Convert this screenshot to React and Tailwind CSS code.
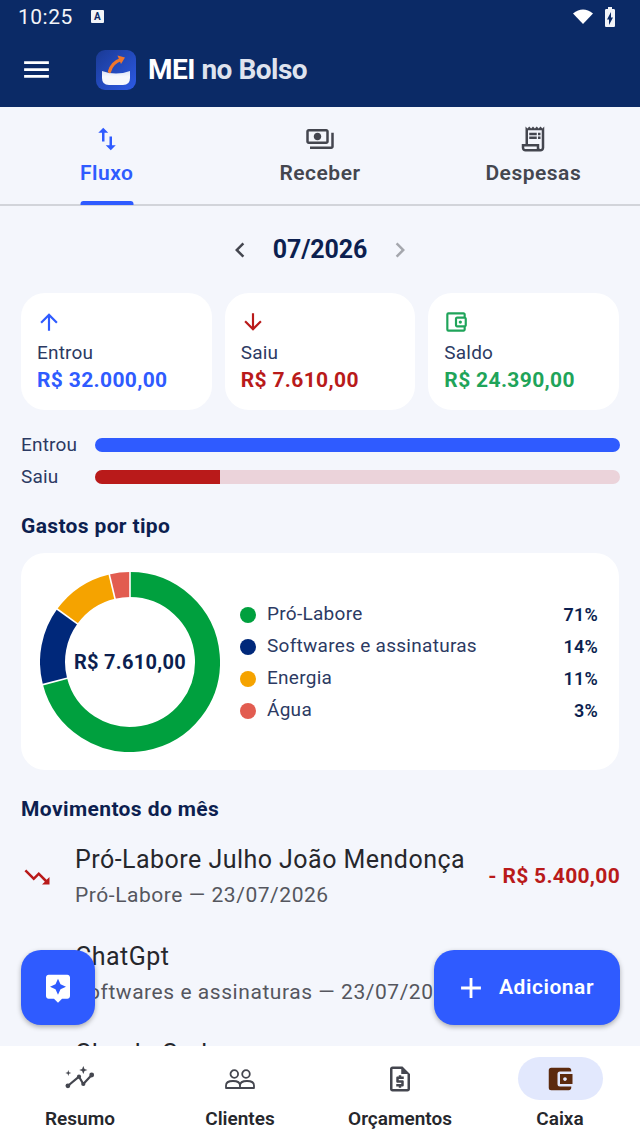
import React from "react";
import {
  MdMenu, MdSwapVert, MdOutlinePayments, MdOutlineReceiptLong, MdChevronLeft, MdChevronRight,
  MdArrowUpward, MdArrowDownward, MdOutlineAccountBalanceWallet, MdTrendingDown, MdAssistant, MdAdd,
  MdOutlineRequestQuote, MdAccountBalanceWallet, MdBatteryChargingFull,
} from "react-icons/md";

function Logo() {
  return (
    <svg width="40" height="40" viewBox="0 0 40 40">
      <defs>
        <linearGradient id="lg" x1="0" y1="0" x2="1" y2="1">
          <stop offset="0" stopColor="#1a3a94" />
          <stop offset="1" stopColor="#2c5ae6" />
        </linearGradient>
        <linearGradient id="bowl" x1="0" y1="0" x2="0" y2="1">
          <stop offset="0" stopColor="#dbe3f6" />
          <stop offset="0.4" stopColor="#f6f8fd" />
        </linearGradient>
      </defs>
      <rect width="40" height="40" rx="9" fill="url(#lg)" />
      <path d="M6 21 Q20 26 34 21 L34 28 Q34 35 27 35 L13 35 Q6 35 6 28 Z" fill="url(#bowl)" />
      <path d="M13.5 21.5 Q16 12.5 25 9.5" fill="none" stroke="#f0762b" strokeWidth="3.2" strokeLinecap="round" />
      <path d="M21.5 5.5 L29 7.5 L25 14 Z" fill="#f0762b" />
    </svg>
  );
}

function ResumoIcon() {
  return (
    <svg width="30" height="30" viewBox="0 0 30 30" fill="none">
      <polyline points="2.7,22 14,12.7 18.3,20 26.7,11" stroke="currentColor" strokeWidth="2.2" strokeLinejoin="round" />
      <circle cx="2.9" cy="21.8" r="2.4" fill="currentColor" />
      <circle cx="14" cy="12.7" r="2.1" fill="currentColor" />
      <circle cx="18.3" cy="20" r="2.1" fill="currentColor" />
      <circle cx="26.7" cy="11" r="2.4" fill="currentColor" />
      <path d="M18.3 2 L19.5 4.9 L22.4 6 L19.5 7.1 L18.3 10 L17.1 7.1 L14.2 6 L17.1 4.9 Z" fill="currentColor" />
      <path d="M3.3 6 L4 8.3 L6.3 9 L4 9.7 L3.3 12 L2.6 9.7 L0.3 9 L2.6 8.3 Z" fill="currentColor" />
    </svg>
  );
}

function ClientesIcon() {
  return (
    <svg width="30" height="30" viewBox="0 0 30 30" fill="none" stroke="currentColor" strokeWidth="1.8" strokeLinejoin="round">
      <circle cx="9.3" cy="10" r="3.8" />
      <circle cx="21" cy="10" r="3.8" />
      <path d="M1 24 V21.5 Q1 17 8 17 Q15 17 15 21.5 V24 Z" />
      <path d="M15 21.5 Q15 17 22 17 Q29 17 29 21.5 V24 H15" />
    </svg>
  );
}

function Donut() {
  const C = 65;
  const r = 77.5;
  const segs = [
    [0, 70.96, "#00a03e"],
    [70.96, 85.0, "#00287a"],
    [85.0, 96.3, "#f5a300"],
    [96.3, 100, "#e25c50"],
  ];
  const pt = (p, rad) => {
    const a = (p / 100) * 2 * Math.PI;
    return [90 + rad * Math.sin(a), 90 - rad * Math.cos(a)];
  };
  return (
    <svg width="180" height="180" viewBox="0 0 180 180" className="block">
      {segs.map(([a, b, c]) => {
        const [x1, y1] = pt(a, r);
        const [x2, y2] = pt(b, r);
        return (
          <path
            key={c}
            d={`M${x1} ${y1} A${r} ${r} 0 ${b - a > 50 ? 1 : 0} 1 ${x2} ${y2}`}
            fill="none"
            stroke={c}
            strokeWidth="25"
          />
        );
      })}
      {segs.map(([a]) => {
        const [x1, y1] = pt(a, C - 1);
        const [x2, y2] = pt(a, 91);
        return <line key={a} x1={x1} y1={y1} x2={x2} y2={y2} stroke="#ffffff" strokeWidth="1.6" />;
      })}
    </svg>
  );
}

function Tab({ icon, label, active }) {
  return (
    <div className="relative flex-1 flex flex-col items-center pt-[17px]">
      <div className={active ? "text-[#2f5bff]" : "text-[#44464f]"}>{icon}</div>
      <div className={`mt-[7px] text-[21px] leading-[24px] font-semibold tracking-[0.5px] ${active ? "text-[#2f5bff]" : "text-[#44464f]"}`}>{label}</div>
      {active && <div className="absolute -bottom-[1px] left-1/2 -translate-x-1/2 w-[53px] h-[4px] rounded-t-[3px] bg-[#2f5bff]" />}
    </div>
  );
}

function Stat({ icon, label, value, color }) {
  return (
    <div className="flex-1 h-[117px] bg-white rounded-[24px] pl-[16px] pt-[16px]">
      <div className="h-[24px] -ml-[1px]">{icon}</div>
      <div className="mt-[8px] text-[19px] leading-[24px] tracking-[0.2px] text-[#2c3a63]">{label}</div>
      <div className={`mt-[3px] text-[21px] leading-[24px] font-bold tracking-[0.35px] ${color}`}>{value}</div>
    </div>
  );
}

function Bar({ label, fill, color, track }) {
  return (
    <div className="flex items-center h-[32px]">
      <div className="w-[74px] text-[19px] tracking-[0.2px] text-[#2c3a63]">{label}</div>
      <div className={`flex-1 h-[14px] rounded-[7px] overflow-hidden ${track}`}>
        <div className={`h-full ${color}`} style={{ width: fill }} />
      </div>
    </div>
  );
}

function Legend({ color, name, pct }) {
  return (
    <div className="flex items-center h-[32px]">
      <div className={`w-[16px] h-[16px] rounded-full ${color}`} />
      <div className="ml-[11px] flex-1 text-[19px] tracking-[0.28px] text-[#2c3a63]">{name}</div>
      <div className="text-[18px] font-semibold tracking-[0.2px] text-[#0c1f50]">{pct}</div>
    </div>
  );
}

function Move({ title, sub, amount }) {
  return (
    <div className="flex items-center h-[97px] shrink-0">
      <div className="w-[54px] shrink-0 text-[#b91a1a]">
        <MdTrendingDown size={30} className="ml-[1px]" />
      </div>
      <div className="flex-1 min-w-0">
        <div className="text-[25px] leading-[32px] tracking-[0.47px] text-[#26272c] whitespace-nowrap">{title}</div>
        <div className="mt-[5px] h-[28px] text-[21px] leading-[28px] tracking-[0.55px] text-[#55565e] whitespace-nowrap">{sub}</div>
      </div>
      {amount && <div className="shrink-0 -mr-[1px] text-[21px] font-bold tracking-[0.3px] text-[#b91a1a] whitespace-nowrap">{amount}</div>}
    </div>
  );
}

function NavItem({ icon, label, active }) {
  return (
    <div className="flex-1 flex flex-col items-center pt-[11px]">
      <div className={`w-[85px] h-[43px] rounded-full flex items-center justify-center ${active ? "bg-[#e2e8fd] text-[#5c2a0e]" : "text-[#44464f]"}`}>
        {icon}
      </div>
      <div className="mt-[7px] text-[19px] leading-[24px] font-semibold text-[#26272c]">{label}</div>
    </div>
  );
}

export default function App() {
  return (
    <div className="relative w-[640px] h-[1140px] overflow-hidden flex flex-col bg-[#f4f6fc] font-['Roboto',sans-serif]">
      <header className="h-[107px] shrink-0 bg-[#0b2a66] text-white flex flex-col">
        <div className="h-[33px] flex items-center pl-[18px] pr-[18px]">
          <span className="text-[21px] leading-[26px] tracking-[0.5px] text-[#f2f4f8]">10:25</span>
          <span className="ml-[18px] w-[13px] h-[13px] bg-[#f2f4f8] rounded-[1px] flex items-center justify-center text-[10px] leading-none font-bold text-[#0b2a66]">A</span>
          <span className="ml-auto flex items-center gap-[5px]">
            <svg width="20" height="15" viewBox="0 0 20 15"><path d="M0 4.5 Q10 -3.5 20 4.5 L10 15 Z" fill="#ffffff" /></svg>
            <MdBatteryChargingFull size={24} className="text-[#f2f4f8]" />
          </span>
        </div>
        <div className="flex-1 flex items-center pl-[20px] pb-[1px]">
          <MdMenu size={33} />
          <div className="ml-[43px]"><Logo /></div>
          <div className="ml-[12px] text-[28px] font-bold tracking-[-0.5px] whitespace-nowrap">
            MEI <span className="text-[#dfe3ee]">no Bolso</span>
          </div>
        </div>
      </header>

      <nav className="h-[99px] shrink-0 flex border-b-[2px] border-[#d2d4da] relative">
        <Tab active label="Fluxo" icon={<MdSwapVert size={30} />} />
        <Tab label="Receber" icon={<MdOutlinePayments size={30} />} />
        <Tab label="Despesas" icon={<MdOutlineReceiptLong size={30} />} />
      </nav>

      <main className="flex-1 min-h-0 overflow-hidden px-[21px] flex flex-col">
        <div className="h-[87px] shrink-0 flex items-center justify-center">
          <MdChevronLeft size={30} className="text-[#44464f]" />
          <div className="mx-[18px] text-[25px] font-bold tracking-[-0.1px] text-[#0c1f50]">07/2026</div>
          <MdChevronRight size={30} className="text-[#a5a7ad]" />
        </div>

        <div className="flex gap-[13px] shrink-0">
          <Stat label="Entrou" value="R$ 32.000,00" color="text-[#2f5bff]" icon={<MdArrowUpward size={26} className="text-[#2f5bff]" />} />
          <Stat label="Saiu" value="R$ 7.610,00" color="text-[#b91a1a]" icon={<MdArrowDownward size={26} className="text-[#b91a1a]" />} />
          <Stat label="Saldo" value="R$ 24.390,00" color="text-[#1fa45a]" icon={<MdOutlineAccountBalanceWallet size={26} className="text-[#1fa45a]" />} />
        </div>

        <div className="mt-[19px] shrink-0 -mr-[1px]">
          <Bar label="Entrou" fill="100%" color="bg-[#2f5bff]" track="bg-[#2f5bff]" />
          <Bar label="Saiu" fill="23.8%" color="bg-[#b91a1a]" track="bg-[#ebd3da]" />
        </div>

        <h2 className="mt-[19px] text-[21px] leading-[28px] font-bold tracking-[0.35px] text-[#0c1f50] shrink-0">Gastos por tipo</h2>

        <div className="mt-[13px] h-[217px] shrink-0 bg-white rounded-[24px] flex items-center pl-[19px] pr-[21px]">
          <div className="relative w-[180px] h-[180px] shrink-0">
            <Donut />
            <div className="absolute inset-0 flex items-center justify-center text-[20px] font-bold tracking-[0.3px] text-[#0c1f50]">R$ 7.610,00</div>
          </div>
          <div className="ml-[20px] flex-1 pt-[2px]">
            <Legend color="bg-[#00a03e]" name="Pró-Labore" pct="71%" />
            <Legend color="bg-[#00287a]" name="Softwares e assinaturas" pct="14%" />
            <Legend color="bg-[#f5a300]" name="Energia" pct="11%" />
            <Legend color="bg-[#e25c50]" name="Água" pct="3%" />
          </div>
        </div>

        <h2 className="mt-[25px] text-[21px] leading-[28px] font-bold tracking-[0.4px] text-[#0c1f50] shrink-0">Movimentos do mês</h2>

        <div className="mt-[5px] flex flex-col">
          <Move title="Pró-Labore Julho João Mendonça" sub="Pró-Labore — 23/07/2026" amount="- R$ 5.400,00" />
          <Move title="ChatGpt" sub="Softwares e assinaturas — 23/07/2026" />
          <Move title="Claude Code" sub="" />
        </div>
      </main>

      <footer className="h-[94px] shrink-0 bg-white flex">
        <NavItem label="Resumo" icon={<ResumoIcon />} />
        <NavItem label="Clientes" icon={<ClientesIcon />} />
        <NavItem label="Orçamentos" icon={<MdOutlineRequestQuote size={30} />} />
        <NavItem active label="Caixa" icon={<MdAccountBalanceWallet size={30} />} />
      </footer>

      <button className="absolute left-[21px] top-[950px] w-[74px] h-[75px] rounded-[20px] bg-[#2f5bff] shadow-[0_2px_5px_rgba(0,0,0,0.3)] flex items-center justify-center text-white">
        <MdAssistant size={32} />
      </button>
      <button className="absolute left-[434px] top-[950px] w-[186px] h-[75px] rounded-[20px] bg-[#2f5bff] shadow-[0_2px_5px_rgba(0,0,0,0.3)] flex items-center justify-center pr-[6px] text-white">
        <MdAdd size={34} />
        <span className="ml-[11px] text-[21px] font-semibold tracking-[0.55px]">Adicionar</span>
      </button>
    </div>
  );
}
